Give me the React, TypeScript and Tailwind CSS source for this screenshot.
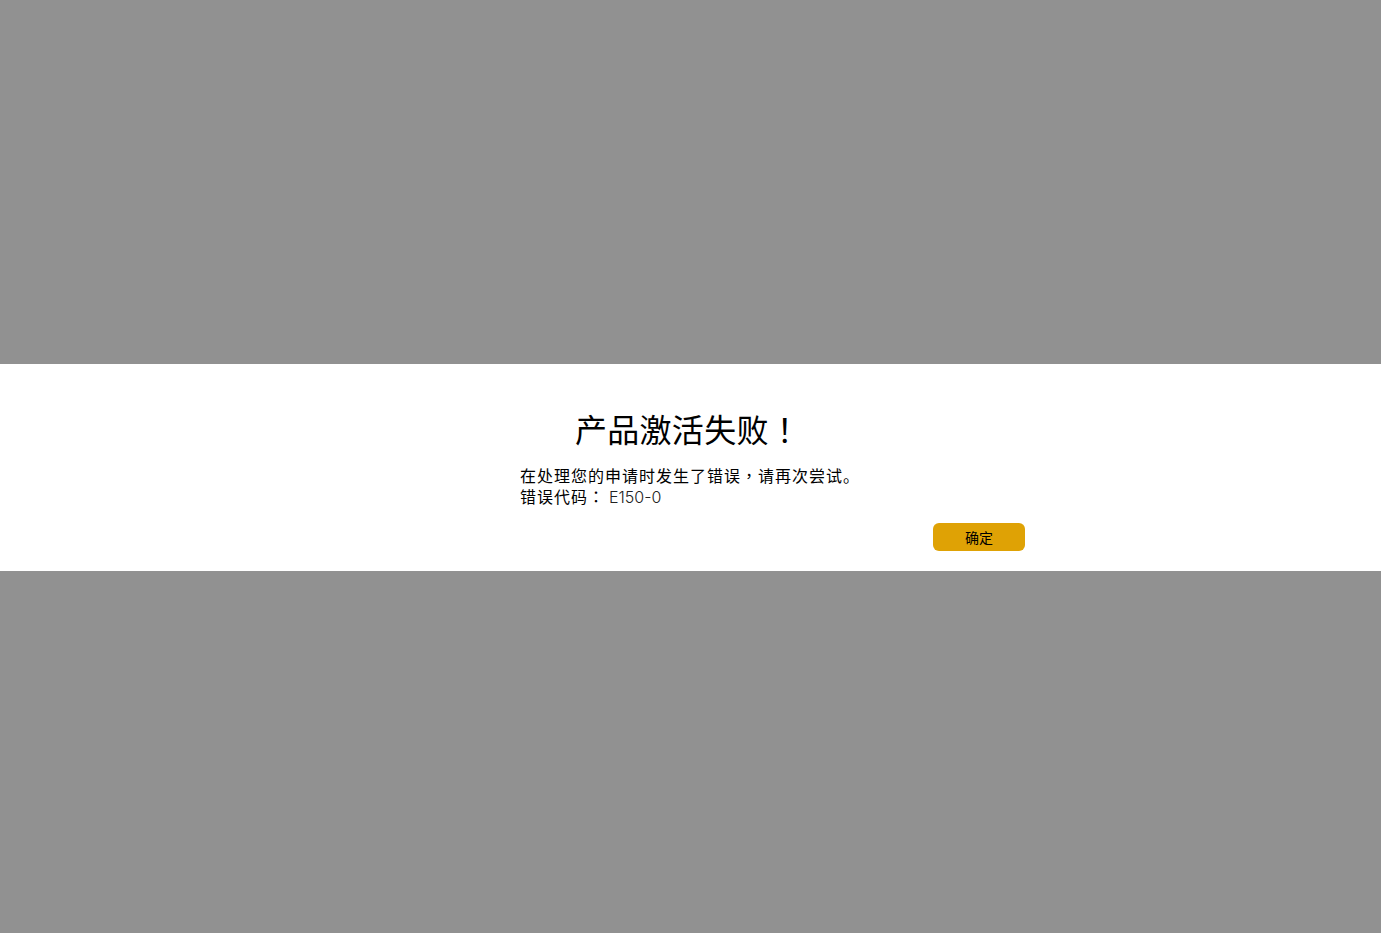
const tc = { fontFamily: '"Noto Sans CJK TC", "Noto Sans CJK SC", sans-serif' };

export default function App() {
  return (
    <div
      className="flex h-[933px] w-full flex-col bg-[#919191]"
      style={{ fontFamily: '"Noto Sans CJK SC", "Noto Sans", sans-serif' }}
    >
      <div className="h-[364px]" />
      <div className="flex h-[207px] flex-col bg-white pt-[44px]">
        <h1 className="pr-[5px] text-center text-[32px] leading-[40px] font-normal tracking-[0.3px] text-black">
          产品激活失败<span style={tc}>！</span>
        </h1>
        <div className="ml-[520px] mt-[17px] w-[505px]">
          <p className="text-[16px] leading-[21px] tracking-[1px] text-black">
            在处理您的申请时发生了错误<span style={tc}>，</span>请再次尝试。
          </p>
          <p className="text-[16px] leading-[21px] tracking-[1px] text-black">
            错误代码<span style={tc}>：</span>
            <span
              className="ml-[4px] font-light tracking-normal text-[#222]"
              style={{ fontFamily: '"Inter", "Noto Sans", sans-serif' }}
            >
              E150-0
            </span>
          </p>
          <div className="mt-[15px] flex justify-end">
            <button className="h-[28px] w-[92px] rounded-[6px] bg-[#dfa205] text-[14px] leading-[28px] text-black">
              确定
            </button>
          </div>
        </div>
      </div>
      <div className="flex-1" />
    </div>
  );
}
